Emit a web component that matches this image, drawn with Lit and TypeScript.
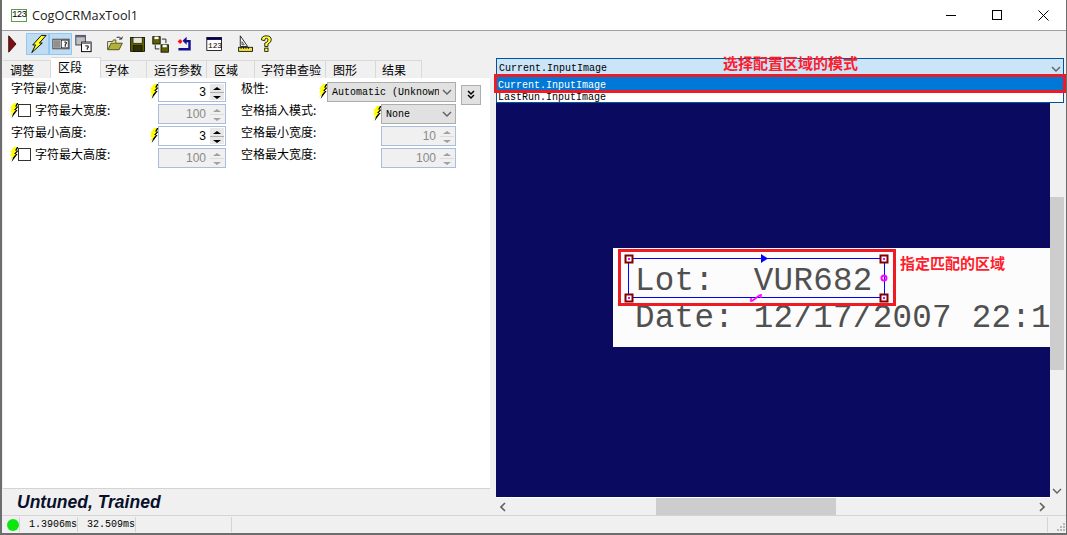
import { LitElement, html, css, svg } from "lit";
import { customElement } from "lit/decorators.js";

const bolt = html`<svg class="bolt" width="8" height="15" viewBox="0 0 8 17" preserveAspectRatio="none">
  <path d="M5 0 L8 0 L6 4 L8 4 L5 8 L7 8 L1 17 L3 10 L1 10 L3 6 L1 6 Z" fill="#000" transform="translate(0.6 0)"/>
  <path d="M4 0 L7 0 L5 4 L7 4 L4 8 L6 8 L0 16 L2 10 L0 10 L2 6 L0 6 Z" fill="#ffff00"/>
</svg>`;

const chevron = (cls = "chev") => html`<svg class=${cls} width="10" height="6" viewBox="0 0 10 6">
  <path d="M1 1 L5 5 L9 1" fill="none" stroke="#606060" stroke-width="1.4"/>
</svg>`;

const toolIcons = [
  { w: 20, on: false, d: svg`<path d="M3 2 L11 11 L3 20 Z" fill="#7b1010" stroke="#3c0808" stroke-width="1"/>` },
  {
    w: 23, on: true,
    d: svg`<path d="M15 2 L20 2 L13 10 L16 10 L5 20 L9 12 L6 12 Z" fill="#ffff20" stroke="#000" stroke-width="1"/>`,
  },
  {
    w: 23, on: true,
    d: svg`<rect x="3" y="6" width="17" height="10" fill="#d8d8d8" stroke="#404040"/><rect x="4" y="7" width="7" height="8" fill="#909090"/><rect x="12" y="7" width="7" height="8" fill="#fff" stroke="#000" stroke-width=".6"/><path d="M15 9 h2 v2 h-1 v3" stroke="#000" fill="none"/>`,
  },
  {
    w: 21, on: false,
    d: svg`<rect x="4" y="2" width="10" height="10" fill="#c0c0c0" stroke="#404060"/><rect x="4" y="2" width="10" height="2" fill="#606080"/><rect x="10" y="9" width="10" height="10" fill="#fff" stroke="#000"/><rect x="10" y="9" width="10" height="2" fill="#808080"/><path d="M14 13 h3 v2 h-1 v2" stroke="#000" fill="none"/>`,
  },
];

const fileIcons = [
  {
    gap: 13,
    d: svg`<path d="M2 8 V18 H16 L20 10 H6 L3 17" fill="#b0b040" stroke="#404000"/><path d="M2 8 H8 L9 6 H12 V10" fill="#d8d870" stroke="#404000"/><path d="M13 3 Q17 1 19 5 M19 5 L20 2 M19 5 L16 5" fill="none" stroke="#000"/>`,
  },
  {
    gap: 5,
    d: svg`<rect x="2" y="3" width="17" height="17" fill="#606000" stroke="#000"/><rect x="5" y="3" width="11" height="7" fill="#e8e8d8" stroke="#000" stroke-width=".6"/><rect x="5" y="13" width="11" height="7" fill="#303000" stroke="#000" stroke-width=".6"/>`,
  },
  {
    gap: 5,
    d: svg`<rect x="1" y="2" width="9" height="9" fill="#606000" stroke="#000"/><rect x="3" y="2" width="5" height="3" fill="#fff"/><rect x="11" y="12" width="9" height="9" fill="#606000" stroke="#000"/><rect x="13" y="12" width="5" height="3" fill="#fff"/><path d="M12 5 H17 V10 M4 12 V17 H9" fill="none" stroke="#000"/>`,
  },
  {
    gap: 6,
    d: svg`<path d="M2 8 l3 -3 l3 3 l-3 3 Z" fill="#ff1010"/><path d="M8 7 L13 2 V6 H18 V19 H3 V16 H15 V9 H13 V12 Z" fill="#101090"/>`,
  },
  {
    gap: 12,
    d: svg`<rect x="1" y="3" width="18" height="16" fill="#fff" stroke="#000"/><rect x="1" y="3" width="18" height="3" fill="#000050"/><text x="2.5" y="16" font-family="Liberation Mono" font-size="9.5" fill="#000">123</text>`,
  },
  {
    gap: 13,
    d: svg`<path d="M4 1 V14 H13 Z" fill="#fff" stroke="#000"/><path d="M6 8 V12 H9 Z" fill="#c0c0c0" stroke="#000" stroke-width=".6"/><rect x="2" y="15" width="17" height="5" fill="#f0e040" stroke="#000"/><path d="M5 15 v2 M8 15 v2 M11 15 v2 M14 15 v2" stroke="#000"/>`,
  },
  {
    gap: 4,
    d: svg`<path d="M3 6 Q3 1 9 1 Q15 1 15 6 Q15 9 11 11 V14 H7 V10 Q11 9 11 6 Q11 4 9 4 Q7 4 7 7 Z" fill="#ffff30" stroke="#000" stroke-width="1"/><rect x="7" y="16" width="4" height="4" fill="#ffff30" stroke="#000" stroke-width="1"/>`,
  },
];

const tabs = [
  { label: "调整", w: 48, pad: 7 },
  { label: "区段", w: 50, pad: 7 },
  { label: "字体", w: 46, pad: 4 },
  { label: "运行参数", w: 60, pad: 7 },
  { label: "区域", w: 48, pad: 7 },
  { label: "字符串查验", w: 71, pad: 6 },
  { label: "图形", w: 50, pad: 7 },
  { label: "结果", w: 46, pad: 6 },
];

@customElement("app-root")
export class AppRoot extends LitElement {
  static styles = css`
    :host {
      display: block;
      width: 1067px;
      height: 535px;
      overflow: hidden;
      background: #f0f0f0;
      font-family: "Noto Sans CJK SC", sans-serif;
      font-size: 12px;
      color: #000;
    }
    .window {
      height: 533px;
      display: flex;
      flex-direction: column;
      border-left: 2px solid #6d6d6d;
      border-right: 1px solid #6d6d6d;
      border-bottom: 2px solid #6d6d6d;
    }
    .titlebar {
      height: 30px;
      flex: none;
      display: flex;
      align-items: center;
      background: #fff;
      border-bottom: 1px solid #a0a0a0;
      padding-left: 9px;
    }
    .app-icon {
      width: 14px;
      height: 11px;
      border: 1px solid #5a9e4a;
      font: 9px/11px "Liberation Mono", monospace;
      text-align: center;
      margin-right: 5px;
      letter-spacing: -0.6px;
    }
    .title {
      font: 12.7px "Open Sans", sans-serif;
      color: #1a1a1a;
    }
    .winbtns {
      margin-left: auto;
      display: flex;
    }
    .winbtns span {
      width: 46px;
      height: 30px;
      display: flex;
      align-items: center;
      justify-content: center;
    }
    .toolbar {
      height: 25px;
      flex: none;
      display: flex;
      align-items: center;
      padding-left: 4px;
    }
    .tool {
      height: 22px;
      display: flex;
      align-items: center;
      justify-content: center;
      box-sizing: border-box;
      flex: none;
    }
    .tool.on {
      background: #c0dcf3;
      border: 1px solid #90c8f6;
    }
    .body {
      flex: 1;
      display: flex;
      min-height: 0;
    }
    .left {
      width: 487px;
      margin-left: 1px;
      flex: none;
      display: flex;
      flex-direction: column;
    }
    .tabs {
      height: 22px;
      flex: none;
      display: flex;
      align-items: flex-end;
    }
    .tab {
      height: 18px;
      box-sizing: border-box;
      border: 1px solid #d9d9d9;
      border-bottom: none;
      border-left: none;
      display: flex;
      align-items: center;
      flex: none;
      line-height: 16px;
    }
    .tab.active {
      height: 21px;
      background: #fff;
      padding-bottom: 3px;
    }
    .panel {
      flex: 1;
      background: #fff;
      display: flex;
      padding: 3px 0 0 7px;
      gap: 15px;
      align-items: flex-start;
      border-bottom: 1px solid #d4d4d4;
    }
    .col {
      display: grid;
      grid-auto-rows: 22px;
    }
    .col.a {
      width: 216px;
    }
    .col.b {
      width: 240px;
    }
    .row {
      display: flex;
      align-items: flex-start;
      line-height: 14px;
    }
    .col.a .lbl {
      padding-left: 1px;
    }
    .col.a .row.check .lbl {
      padding-left: 4px;
    }
    .row .ctl {
      margin-left: auto;
      display: flex;
      align-items: flex-start;
      padding-top: 1px;
    }
    .ctl .bolt {
      margin-top: 2px;
    }
    .col.b .ctl {
      padding-right: 25px;
    }
    .col.b .ctl.wide {
      padding-right: 0;
    }
    .lbl {
      line-height: 14px;
      white-space: nowrap;
    }
    .bolt {
      flex: none;
      display: block;
    }
    .box {
      width: 11px;
      height: 11px;
      border: 1px solid #333;
      background: #fff;
      margin-top: 1px;
      flex: none;
    }
    .spin {
      width: 68px;
      height: 20px;
      box-sizing: border-box;
      border: 1px solid #a9bedd;
      background: #fff;
      display: flex;
      font: 12px "Liberation Sans", sans-serif;
      line-height: 18px;
    }
    .spin.wide {
      width: 75px;
    }
    .spin.off {
      background: #f0f0f0;
      color: #8a8a8a;
    }
    .spin .val {
      flex: 1;
      text-align: right;
      padding-right: 4px;
    }
    .spin .btns {
      width: 14px;
      display: flex;
      flex-direction: column;
      margin: 1px 1px 1px 0;
      background: #adadad;
      gap: 1px;
    }
    .spin.off .btns {
      background: #dcdcdc;
    }
    .spin .btns i {
      flex: 1;
      background: #e8e8e8;
    }
    .spin.off .btns i {
      background: #f0f0f0;
    }
    .arrow-up,
    .arrow-down {
      width: 0;
      height: 0;
      margin: 3px auto 0;
      border-left: 4px solid transparent;
      border-right: 4px solid transparent;
    }
    .arrow-up {
      border-bottom: 3px solid #000;
    }
    .arrow-down {
      border-top: 3px solid #000;
    }
    .spin.off .arrow-up {
      border-bottom-color: #a0a0a0;
    }
    .spin.off .arrow-down {
      border-top-color: #a0a0a0;
    }
    .select {
      height: 20px;
      box-sizing: border-box;
      border: 1px solid #adadad;
      background: #e1e1e1;
      font: 10px/18px "Liberation Mono", monospace;
      display: flex;
      align-items: center;
      padding: 0 3px;
      white-space: nowrap;
      overflow: hidden;
    }
    .select span {
      flex: 1;
      overflow: hidden;
      padding: 1px 0 0 1px;
    }
    .select .chev {
      flex: none;
      margin-left: 3px;
    }
    .dbl {
      width: 20px;
      height: 20px;
      box-sizing: border-box;
      border: 1px solid #adadad;
      background: #e1e1e1;
      margin: 3px 0 0 5px;
      display: flex;
      align-items: center;
      justify-content: center;
    }
    .result {
      height: 26px;
      flex: none;
      display: flex;
      align-items: center;
      padding-left: 14px;
      font: italic bold 17.5px "Liberation Sans", sans-serif;
      color: #08102c;
    }
    .right {
      width: 568px;
      margin-left: 6px;
      flex: none;
      display: flex;
      flex-direction: column;
      position: relative;
      padding-top: 2px;
    }
    .combo {
      height: 18px;
      flex: none;
      box-sizing: border-box;
      border: 1px solid #005499;
      background: #cce4f7;
      display: flex;
      align-items: center;
      padding: 0 1px 0 2px;
      font: 10px/16px "Liberation Mono", monospace;
    }
    .combo span {
      flex: 1;
      padding-top: 3px;
    }
    .combo .chev {
      margin: 3px 1px 0 0;
    }
    .list {
      position: absolute;
      left: 0;
      right: 0;
      top: 20px;
      height: 27px;
      box-sizing: border-box;
      border: 1px solid #005499;
      border-top: 1px solid #fff;
      background: #fff;
      font: 10px/10px "Liberation Mono", monospace;
      z-index: 2;
    }
    .list div {
      padding-left: 1px;
    }
    .list .sel {
      height: 15px;
      line-height: 17px;
      background: #0078d7;
      color: #fff;
    }
    .list .other {
      height: 10px;
      line-height: 12px;
    }
    .viewer {
      flex: 1;
      display: grid;
      grid-template-columns: 554px 14px;
      grid-template-rows: 1fr 17px;
      min-height: 0;
    }
    .canvas {
      background: #0a0a60;
      position: relative;
      overflow: hidden;
      border-bottom: 1px solid #fff;
    }
    .photo {
      position: absolute;
      left: 117px;
      top: 172px;
      width: 437px;
      height: 99px;
      background: #fcfcfc;
      font: 32.5px/37px "Liberation Mono", monospace;
      letter-spacing: 0.3px;
      color: #505050;
      white-space: pre;
      box-sizing: border-box;
      padding: 15px 0 0 22px;
      overflow: hidden;
    }
    .overlay {
      position: absolute;
      left: 0;
      top: 0;
    }
    .vbar,
    .hbar {
      position: relative;
      background: #f0f0f0;
    }
    .vbar .thumb {
      position: absolute;
      left: 0;
      right: 0;
      top: 121px;
      height: 173px;
      background: #cdcdcd;
    }
    .vbar svg {
      position: absolute;
      left: 2px;
      bottom: 4px;
    }
    .hbar .thumb {
      position: absolute;
      top: 0;
      bottom: 0;
      left: 160px;
      width: 180px;
      background: #cdcdcd;
    }
    .hbar svg.l {
      position: absolute;
      left: 4px;
      top: 4px;
    }
    .hbar svg.r {
      position: absolute;
      right: 5px;
      top: 4px;
    }
    .note {
      position: absolute;
      color: #ff1c2c;
      font-size: 15px;
      font-weight: 700;
      line-height: 16px;
      white-space: nowrap;
      z-index: 4;
    }
    .note.top {
      left: 227px;
      top: -1px;
    }
    .note.roi {
      left: 404px;
      top: 179px;
    }
    .mark {
      position: absolute;
      left: -2px;
      right: -2px;
      top: 18px;
      height: 19px;
      box-sizing: border-box;
      border: 3px solid #ed1c24;
      z-index: 3;
    }
    .status {
      height: 17px;
      flex: none;
      border-top: 1px solid #d4d4d4;
      display: flex;
      align-items: center;
      font: 10px "Liberation Mono", monospace;
    }
    .status > div {
      height: 15px;
      box-sizing: border-box;
      border-right: 1px solid #d4d4d4;
      line-height: 15px;
      flex: none;
    }
    .status > .led {
      width: 18px;
      display: flex;
      align-items: center;
      padding-left: 5px;
    }
    .led i {
      width: 12px;
      height: 12px;
      border-radius: 50%;
      background: #0ee60e;
      display: block;
    }
    .t1,
    .t2 {
      width: 58px;
      padding-left: 9px;
    }
    .t3 {
      width: 96px;
    }
    .t4 {
      width: 816px;
    }
    .status > .grip {
      border: 0;
      flex: 1;
      display: flex;
      align-items: flex-end;
      justify-content: flex-end;
    }
  `;

  private spin(val: string, off = false, wide = false) {
    return html`<div class="spin ${off ? "off" : ""} ${wide ? "wide" : ""}">
      <span class="val">${val}</span>
      <span class="btns">
        <i><div class="arrow-up"></div></i>
        <i><div class="arrow-down"></div></i>
      </span>
    </div>`;
  }

  private leftRow(label: string, val: string, check: boolean) {
    return html`<div class="row ${check ? "check" : ""}">
      ${check ? html`${bolt}<span class="box"></span>` : ""}
      <span class="lbl">${label}:</span>
      <div class="ctl">${check ? "" : bolt}${this.spin(val, check)}</div>
    </div>`;
  }

  render() {
    return html`
      <div class="window">
        <div class="titlebar">
          <span class="app-icon">123</span>
          <span class="title">CogOCRMaxTool1</span>
          <div class="winbtns">
            <span
              ><svg width="11" height="11" viewBox="0 0 11 11"><path d="M0 5.5 H10" stroke="#000"/></svg></span
            >
            <span
              ><svg width="11" height="11" viewBox="0 0 11 11"><rect x=".5" y=".5" width="9" height="9" fill="none" stroke="#000"/></svg></span
            >
            <span
              ><svg width="11" height="11" viewBox="0 0 11 11"><path d="M.5 .5 L10.5 10.5 M10.5 .5 L.5 10.5" stroke="#000"/></svg></span
            >
          </div>
        </div>

        <div class="toolbar">
          ${toolIcons.map(
            (t) => html`<div class="tool ${t.on ? "on" : ""}" style="width:${t.w}px">
              <svg width="22" height="22" viewBox="0 0 22 22">${t.d}</svg>
            </div>`
          )}
          ${fileIcons.map(
            (t) => html`<div class="tool" style="margin-left:${t.gap}px;width:18px">
              <svg width="20" height="22" viewBox="0 0 22 22">${t.d}</svg>
            </div>`
          )}
        </div>

        <div class="body">
          <div class="left">
            <div class="tabs">
              ${tabs.map(
                (t, i) => html`<div
                  class="tab ${i === 1 ? "active" : ""}"
                  style="width:${t.w}px;padding-left:${t.pad}px"
                >
                  ${t.label}
                </div>`
              )}
            </div>
            <div class="panel">
              <div class="col a">
                ${this.leftRow("字符最小宽度", "3", false)} ${this.leftRow("字符最大宽度", "100", true)}
                ${this.leftRow("字符最小高度", "3", false)} ${this.leftRow("字符最大高度", "100", true)}
              </div>
              <div class="col b">
                <div class="row">
                  <span class="lbl">极性:</span>
                  <div class="ctl wide">
                    ${bolt}
                    <div class="select" style="width:129px">
                      <span>Automatic (Unknown</span>${chevron()}
                    </div>
                    <div class="dbl">
                      <svg width="8" height="10" viewBox="0 0 8 10">
                        <path d="M1 1 L4 4 L7 1 M1 5 L4 8 L7 5" fill="none" stroke="#000" stroke-width="1.5"/>
                      </svg>
                    </div>
                  </div>
                </div>
                <div class="row">
                  <span class="lbl">空格插入模式:</span>
                  <div class="ctl">
                    ${bolt}
                    <div class="select" style="width:75px"><span>None</span>${chevron()}</div>
                  </div>
                </div>
                <div class="row">
                  <span class="lbl">空格最小宽度:</span>
                  <div class="ctl">${this.spin("10", true, true)}</div>
                </div>
                <div class="row">
                  <span class="lbl">空格最大宽度:</span>
                  <div class="ctl">${this.spin("100", true, true)}</div>
                </div>
              </div>
            </div>
            <div class="result">Untuned, Trained</div>
          </div>

          <div class="right">
            <div class="combo"><span>Current.InputImage</span>${chevron()}</div>
            <div class="list">
              <div class="sel">Current.InputImage</div>
              <div class="other">LastRun.InputImage</div>
            </div>
            <div class="mark"></div>
            <div class="note top">选择配置区域的模式</div>
            <div class="viewer">
              <div class="canvas">
                <div class="photo">Lot:  VUR682
Date: 12/17/2007 22:1</div>
                <svg class="overlay" width="554" height="422" viewBox="0 0 554 422">
                  <rect x="123.5" y="174.5" width="275" height="54" fill="none" stroke="#ed1c24" stroke-width="3"/>
                  <rect x="132.5" y="182.5" width="256" height="39" fill="none" stroke="#0000ff"/>
                  <path d="M265 178 L272 182.5 L265 187 Z" fill="#0000ff"/>
                  ${[
                    [133, 183],
                    [388, 183],
                    [133, 222],
                    [388, 222],
                  ].map(
                    ([x, y]) => svg`<rect x=${x - 3.5} y=${y - 3.5} width="7" height="7" fill="#fff" stroke="#800000" stroke-width="2"/>
                      <rect x=${x - 1} y=${y - 1} width="2" height="2" fill="#f0f"/>`
                  )}
                  <circle cx="388" cy="202" r="2.5" fill="none" stroke="#f0f" stroke-width="2"/>
                  <path d="M256 225 L264 219 M255 222 V226 M265 218 V222" stroke="#f0f" stroke-width="1.6" fill="none"/>
                </svg>
                <div class="note roi">指定匹配的区域</div>
              </div>
              <div class="vbar">
                <div class="thumb"></div>
                ${chevron("v")}
              </div>
              <div class="hbar">
                <div class="thumb"></div>
                <svg class="l" width="6" height="10" viewBox="0 0 6 10"><path d="M5 1 L1 5 L5 9" fill="none" stroke="#606060" stroke-width="1.6"/></svg>
                <svg class="r" width="6" height="10" viewBox="0 0 6 10"><path d="M1 1 L5 5 L1 9" fill="none" stroke="#606060" stroke-width="1.6"/></svg>
              </div>
              <div></div>
            </div>
          </div>
        </div>

        <div class="status">
          <div class="led"><i></i></div>
          <div class="t1">1.3906ms</div>
          <div class="t2">32.509ms</div>
          <div class="t3"></div>
          <div class="t4"></div>
          <div class="grip">
            <svg width="10" height="10" viewBox="0 0 10 10">
              <path d="M7 1 h2 v2 h-2 Z M4 4 h2 v2 h-2 Z M7 4 h2 v2 h-2 Z M1 7 h2 v2 h-2 Z M4 7 h2 v2 h-2 Z M7 7 h2 v2 h-2 Z" fill="#b8b8b8"/>
            </svg>
          </div>
        </div>
      </div>
    `;
  }
}
